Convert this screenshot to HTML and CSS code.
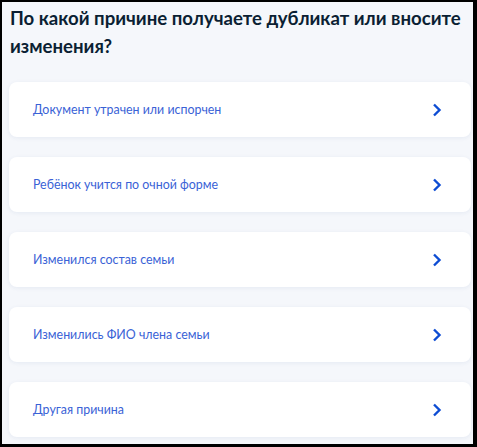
FILE: index.html
```html
<!DOCTYPE html>
<html lang="ru">
<head>
  <meta charset="UTF-8">
  <meta name="viewport" content="width=device-width, initial-scale=1.0">
  <title>Причина получения дубликата</title>
  <link rel="stylesheet" href="styles.css">
</head>
<body>
  <div class="frame">
    <h1>По какой причине получаете дубликат или вносите изменения?</h1>
    <div class="options">
      <a class="option" href="#">
        <span>Документ утрачен или испорчен</span>
        <svg class="arrow" viewBox="0 0 10 14" width="10" height="14"><path d="M2 1.5 7.5 7 2 12.5" fill="none" stroke="currentColor" stroke-width="2.4"/></svg>
      </a>
      <a class="option" href="#">
        <span>Ребёнок учится по очной форме</span>
        <svg class="arrow" viewBox="0 0 10 14" width="10" height="14"><path d="M2 1.5 7.5 7 2 12.5" fill="none" stroke="currentColor" stroke-width="2.4"/></svg>
      </a>
      <a class="option" href="#">
        <span>Изменился состав семьи</span>
        <svg class="arrow" viewBox="0 0 10 14" width="10" height="14"><path d="M2 1.5 7.5 7 2 12.5" fill="none" stroke="currentColor" stroke-width="2.4"/></svg>
      </a>
      <a class="option" href="#">
        <span>Изменились ФИО члена семьи</span>
        <svg class="arrow" viewBox="0 0 10 14" width="10" height="14"><path d="M2 1.5 7.5 7 2 12.5" fill="none" stroke="currentColor" stroke-width="2.4"/></svg>
      </a>
      <a class="option" href="#">
        <span>Другая причина</span>
        <svg class="arrow" viewBox="0 0 10 14" width="10" height="14"><path d="M2 1.5 7.5 7 2 12.5" fill="none" stroke="currentColor" stroke-width="2.4"/></svg>
      </a>
    </div>
  </div>
</body>
</html>
```
FILE: styles.css
```css
html, body { margin: 0; height: 100%; }
body { font-family: Lato, "Liberation Sans", sans-serif; background: #000; }
.frame {
  box-sizing: border-box;
  height: 447px;
  border-style: solid;
  border-color: #000;
  border-width: 2px 4px 3px 2px;
  background: #f5f7fb;
  padding: 2px 2px 0 7px;
  overflow: hidden;
}
h1 {
  margin: 0 0 22px 1px;
  font-size: 18.6px;
  line-height: 28px;
  font-weight: 700;
  color: #0b1f33;
}
.options { display: flex; flex-direction: column; gap: 20px; }
.option {
  display: flex;
  align-items: center;
  justify-content: space-between;
  height: 55px;
  padding: 0 29px 0 24px;
  background: #fff;
  border-radius: 8px;
  box-shadow: 0 1px 4px rgba(44, 72, 140, 0.08);
  color: #3a62d6;
  font-size: 12.4px;
  text-decoration: none;
}
.arrow { color: #0d4cd3; }
```
